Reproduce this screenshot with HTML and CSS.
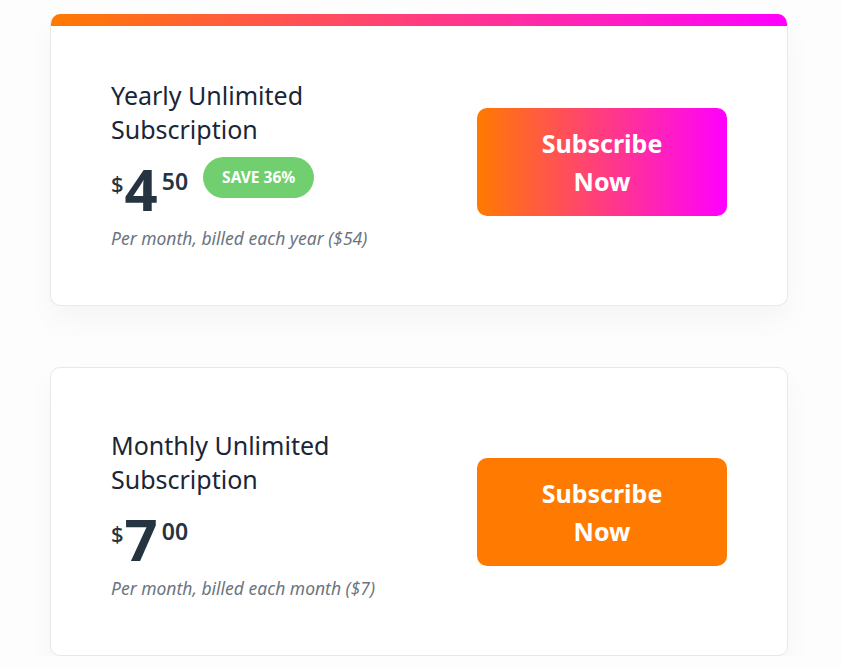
FILE: index.html
```html
<!DOCTYPE html>
<html lang="en">
<head>
    <meta charset="UTF-8">
    <meta name="viewport" content="width=device-width, initial-scale=1.0">
    <title>Plans</title>
    <link rel="stylesheet" href="styles.css">
</head>
<body>
    <div class="plans">
        <div class="plan plan-featured">
            <div class="plan-bar"></div>
            <div class="plan-body">
                <div class="plan-info">
                    <h2 class="plan-name">Yearly Unlimited<br>Subscription</h2>
                    <div class="price-row">
                        <div class="price">
                            <span class="price-currency">$</span>
                            <span class="price-whole">4</span>
                            <span class="price-cents">50</span>
                        </div>
                        <span class="badge">SAVE 36%</span>
                    </div>
                    <p class="plan-note">Per month, billed each year ($54)</p>
                </div>
                <button class="subscribe subscribe-gradient">Subscribe<br>Now</button>
            </div>
        </div>

        <div class="plan">
            <div class="plan-body">
                <div class="plan-info">
                    <h2 class="plan-name">Monthly Unlimited<br>Subscription</h2>
                    <div class="price-row">
                        <div class="price">
                            <span class="price-currency">$</span>
                            <span class="price-whole">7</span>
                            <span class="price-cents">00</span>
                        </div>
                    </div>
                    <p class="plan-note">Per month, billed each month ($7)</p>
                </div>
                <button class="subscribe">Subscribe<br>Now</button>
            </div>
        </div>
    </div>
</body>
</html>
```

FILE: styles.css
```css
body {
    font-family: "Noto Sans", "Open Sans", sans-serif;
    margin: 0;
    padding: 0;
    background-color: #fdfdfd;
}
.plans {
    width: 738px;
    margin-left: 50px;
    padding-top: 14px;
    display: flex;
    flex-direction: column;
    gap: 61px;
}
.plan {
    background-color: #fff;
    border: 1px solid #e8e8e8;
    border-radius: 10px;
    box-shadow: 0 14px 28px rgba(0, 0, 0, 0.035);
    overflow: hidden;
}
.plan-featured {
    border-top: none;
}
.plan-bar {
    height: 12px;
    background: linear-gradient(to right, #ff7a00, #ff00ff);
}
.plan-body {
    display: flex;
    align-items: center;
    justify-content: space-between;
    padding: 60px 60px 55px 60px;
}
.plan-featured .plan-body {
    padding-top: 52px;
}
.plan-name {
    margin: 0;
    font-size: 25px;
    font-weight: 400;
    line-height: 34px;
    color: #1a2636;
}
.price-row {
    display: flex;
    align-items: center;
    gap: 15px;
    margin-top: 15px;
    height: 56px;
}
.price {
    display: flex;
    align-items: flex-start;
    color: #263340;
}
.price-currency {
    font-size: 22px;
    font-weight: 500;
    line-height: 26px;
    margin-top: 9px;
    margin-right: 1px;
}
.price-whole {
    font-size: 58px;
    font-weight: 700;
    line-height: 56px;
}
.price-cents {
    font-size: 23px;
    font-weight: 600;
    line-height: 26px;
    margin-top: 7px;
    margin-left: 4px;
}
.badge {
    background-color: #72cf6f;
    color: #fff;
    font-size: 15.5px;
    font-weight: 700;
    line-height: 21px;
    border-radius: 21px;
    padding: 10px 19px;
    margin-bottom: 24px;
}
.plan-note {
    margin: 10px 0 0 0;
    font-size: 17.5px;
    line-height: 23px;
    font-style: italic;
    color: #6b7580;
}
.subscribe {
    width: 250px;
    height: 108px;
    margin-bottom: 4px;
    border: none;
    border-radius: 10px;
    background-color: #ff7a00;
    color: #fff;
    font-family: inherit;
    font-size: 25px;
    font-weight: 700;
    line-height: 38px;
    cursor: pointer;
}
.subscribe-gradient {
    background: linear-gradient(to right, #ff7a00, #ff00ff);
}
```
